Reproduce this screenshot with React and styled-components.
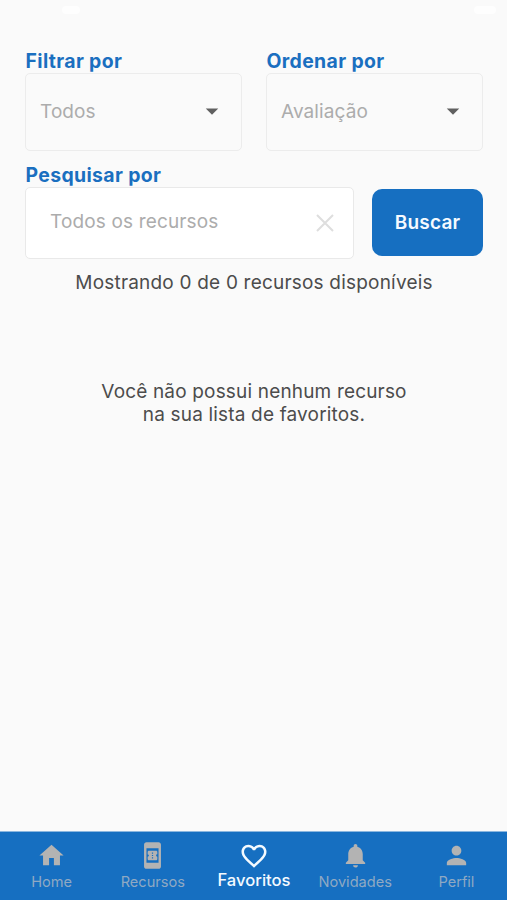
import React, { useState } from 'react'
import styled, { createGlobalStyle } from 'styled-components'
import {
  MdHome,
  MdBookOnline,
  MdFavoriteBorder,
  MdNotifications,
  MdPerson,
  MdArrowDropDown,
} from 'react-icons/md'

const tabs = [
  { id: 'home', label: 'Home', icon: MdHome },
  { id: 'recursos', label: 'Recursos', icon: MdBookOnline },
  { id: 'favoritos', label: 'Favoritos', icon: MdFavoriteBorder },
  { id: 'novidades', label: 'Novidades', icon: MdNotifications },
  { id: 'perfil', label: 'Perfil', icon: MdPerson },
]

const App = () => {
  const [activeTab, setActiveTab] = useState('favoritos')
  const [search, setSearch] = useState('')

  return (
    <StyledScreen>
      <GlobalStyle />
      <StatusBar>
        <StatusMark $width={18} />
        <StatusMark $width={22} />
      </StatusBar>

      <Content>
        <FilterRow>
          <Field>
            <Label>Filtrar por</Label>
            <Select>
              Todos
              <MdArrowDropDown />
            </Select>
          </Field>
          <Field>
            <Label>Ordenar por</Label>
            <Select>
              Avaliação
              <MdArrowDropDown />
            </Select>
          </Field>
        </FilterRow>

        <Label>Pesquisar por</Label>
        <SearchRow>
          <SearchBox>
            <input
              type="text"
              placeholder="Todos os recursos"
              value={search}
              onChange={(e) => setSearch(e.target.value)}
            />
            <svg onClick={() => setSearch('')} width="18" height="18" viewBox="0 0 18 18">
              <path d="M1 1L17 17M17 1L1 17" stroke="#dedede" strokeWidth="2" />
            </svg>
          </SearchBox>
          <SearchButton>Buscar</SearchButton>
        </SearchRow>

        <Count>Mostrando 0 de 0 recursos disponíveis</Count>
        <Empty>
          Você não possui nenhum recurso
          <br />
          na sua lista de favoritos.
        </Empty>
      </Content>

      <TabBar>
        {tabs.map(({ id, label, icon: Icon }) => (
          <Tab key={id} $active={activeTab === id} onClick={() => setActiveTab(id)}>
            <Icon />
            <span>{label}</span>
          </Tab>
        ))}
      </TabBar>
    </StyledScreen>
  )
}

const GlobalStyle = createGlobalStyle`
  * {
    box-sizing: border-box;
  }
  body {
    margin: 0;
    background: #fafafa;
    font-family: Inter, 'Liberation Sans', sans-serif;
  }
`

const StyledScreen = styled.div`
  height: 100vh;
  display: flex;
  flex-direction: column;
  background: #fafafa;
`

const StatusBar = styled.div`
  height: 50px;
  padding: 6px 11px 0 62px;
  display: flex;
  justify-content: space-between;
`

const StatusMark = styled.div`
  width: ${(props) => props.$width}px;
  height: 8px;
  border-radius: 4px;
  background: #fefefe;
`

const Content = styled.div`
  flex: 1;
  padding: 0 24px 0 25px;
`

const FilterRow = styled.div`
  display: grid;
  grid-template-columns: 1fr 1fr;
  gap: 24px;
  margin-bottom: 13px;
`

const Field = styled.div`
  min-width: 0;
`

const Label = styled.div`
  height: 23px;
  line-height: 23px;
  padding-left: 0.5px;
  font-size: 19.4px;
  font-weight: 700;
  letter-spacing: 0.37px;
  color: #1a6fc0;
  white-space: nowrap;
`

const Select = styled.div`
  height: 78px;
  padding: 0 14px 2px 14px;
  display: flex;
  justify-content: space-between;
  align-items: center;
  border: 1.5px solid #ececec;
  border-radius: 5px;
  font-size: 19px;
  letter-spacing: 0.1px;
  color: #acacac;
  & > svg {
    width: 30px;
    height: 30px;
    color: #606060;
  }
`

const SearchRow = styled.div`
  display: flex;
  align-items: flex-start;
  gap: 18px;
`

const SearchBox = styled.div`
  flex: 1;
  min-width: 0;
  height: 72px;
  padding: 0 19px 4px 24px;
  display: flex;
  align-items: center;
  background: #fff;
  border: 1px solid #e9e9e9;
  border-radius: 5px;
  & > input {
    flex: 1;
    min-width: 0;
    padding: 0;
    border: none;
    outline: none;
    background: none;
    font-family: inherit;
    font-size: 19px;
    letter-spacing: 0.15px;
  }
  & > input::placeholder {
    color: #acacac;
    opacity: 1;
  }
  & > svg {
    flex-shrink: 0;
    cursor: pointer;
    margin-top: 4px;
  }
`

const SearchButton = styled.button`
  width: 111px;
  height: 67px;
  flex-shrink: 0;
  margin-top: 2px;
  padding: 0;
  border: none;
  border-radius: 10px;
  background: #166fc1;
  color: #f5faff;
  font-family: inherit;
  font-size: 19px;
  font-weight: 600;
  letter-spacing: 0.2px;
  cursor: pointer;
`

const Count = styled.p`
  margin: 12px 0 0;
  line-height: 23px;
  font-size: 19px;
  letter-spacing: 0.2px;
  text-align: center;
  color: #4c4c4c;
  white-space: nowrap;
`

const Empty = styled.p`
  margin: 86px 0 0;
  line-height: 23px;
  font-size: 19px;
  letter-spacing: 0.17px;
  text-align: center;
  color: #4c4c4c;
`

const TabBar = styled.nav`
  height: 69px;
  padding-left: 1px;
  display: grid;
  grid-template-columns: repeat(5, 1fr);
  background: #166fc1;
  border-top: 1px solid #8cb7df;
`

const Tab = styled.div`
  display: flex;
  flex-direction: column;
  align-items: center;
  justify-content: flex-start;
  padding-top: 9px;
  color: ${(props) => (props.$active ? '#f4faff' : '#b3b3b3')};
  cursor: pointer;
  & > svg {
    width: ${(props) => (props.$active ? '30px' : '29px')};
    height: ${(props) => (props.$active ? '30px' : '29px')};
  }
  & > span {
    font-size: ${(props) => (props.$active ? '16.6px' : '14.6px')};
    line-height: 20px;
    margin-top: ${(props) => (props.$active ? '-1px' : '2px')};
    color: ${(props) => (props.$active ? '#f4faff' : '#8fa9c3')};
    font-weight: ${(props) => (props.$active ? 500 : 400)};
  }
`

export default App
